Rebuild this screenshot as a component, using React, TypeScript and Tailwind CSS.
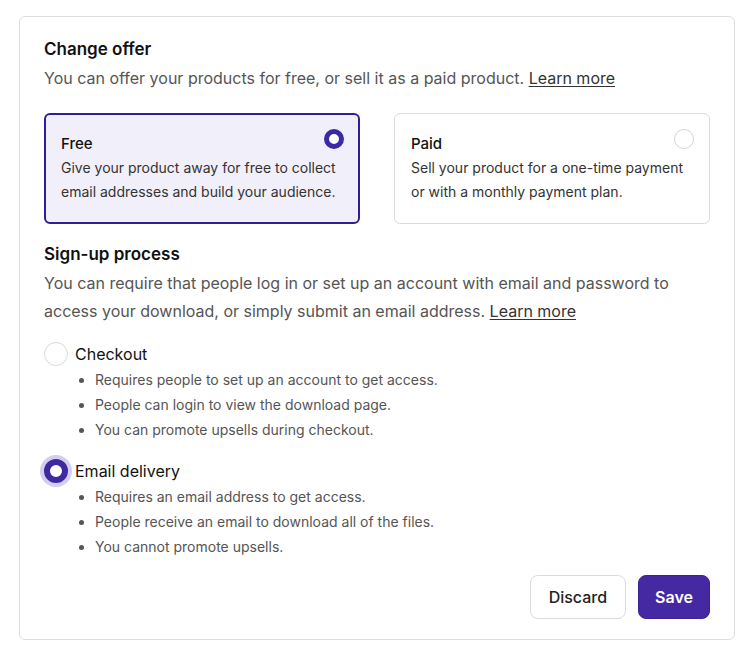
const bullets = {
  checkout: [
    "Requires people to set up an account to get access.",
    "People can login to view the download page.",
    "You can promote upsells during checkout.",
  ],
  email: [
    "Requires an email address to get access.",
    "People receive an email to download all of the files.",
    "You cannot promote upsells.",
  ],
};

const OfferCard = ({
  title,
  text,
  selected,
}: {
  title: string;
  text: string;
  selected?: boolean;
}) => (
  <div
    className={
      selected
        ? "relative flex-1 rounded-md border-2 border-[#2e1f99] bg-[#f1effa] px-[15px] pt-[18px] pb-[18px]"
        : "relative flex-1 rounded-md border border-[#dcdcdc] bg-white px-4 pt-[19px] pb-[19px]"
    }
  >
    <div className="text-[15px] font-medium leading-[22px] text-[#111]">{title}</div>
    <p className="mt-[1px] text-[14px] leading-6 text-[#333]">{text}</p>
    {selected ? (
      <span className="absolute right-[14px] top-[14px] h-5 w-5 rounded-full border-[5px] border-[#3a2aa3] bg-white" />
    ) : (
      <span className="absolute right-[15px] top-[15px] h-5 w-5 rounded-full border border-[#d4d4d4] bg-white" />
    )}
  </div>
);

const Option = ({
  label,
  items,
  selected,
}: {
  label: string;
  items: string[];
  selected?: boolean;
}) => (
  <div>
    <div className="flex items-center gap-[7px]">
      {selected ? (
        <span className="h-6 w-6 rounded-full border-[6px] border-[#3f28a0] bg-white ring-4 ring-[#d3cdef]" />
      ) : (
        <span className="h-6 w-6 rounded-full border border-[#d8d8d8] bg-white" />
      )}
      <span className="text-[16px] leading-6 text-[#111]">{label}</span>
    </div>
    <ul className="mt-[1px] ml-[38px] list-disc pl-[13px] text-[14px] leading-[25px] text-[#555] marker:text-[#555]">
      {items.map((item, i) => (
        <li key={i}>{item}</li>
      ))}
    </ul>
  </div>
);

const App = () => {
  return (
    <div className="min-h-screen bg-white pl-[19px] pr-[15px] pt-4 font-['Inter',sans-serif]">
      <div className="rounded-md border border-[#dddddd] px-6 pt-[20px] pb-[20px]">
        <h2 className="text-[17px] font-semibold leading-6 text-[#111]">Change offer</h2>
        <p className="mt-[5px] text-[16px] leading-6 text-[#555]">
          You can offer your products for free, or sell it as a paid product.{" "}
          <a href="#" className="text-[#333] underline underline-offset-2">
            Learn more
          </a>
        </p>
        <div className="mt-[23px] flex gap-[34px]">
          <OfferCard
            title="Free"
            text="Give your product away for free to collect email addresses and build your audience."
            selected
          />
          <OfferCard
            title="Paid"
            text="Sell your product for a one-time payment or with a monthly payment plan."
          />
        </div>

        <h2 className="mt-[18px] text-[17px] font-semibold leading-6 text-[#111]">
          Sign-up process
        </h2>
        <p className="mt-[3px] text-[16px] leading-7 text-[#555]">
          You can require that people log in or set up an account with email and password to
          access your download, or simply submit an email address.{" "}
          <a href="#" className="text-[#333] underline underline-offset-2">
            Learn more
          </a>
        </p>

        <div className="mt-[17px] flex flex-col gap-[17px]">
          <Option label="Checkout" items={bullets.checkout} />
          <Option label="Email delivery" items={bullets.email} selected />
        </div>

        <div className="mt-[16px] flex justify-end gap-3">
          <button className="h-11 rounded-lg border border-[#dcdcdc] bg-white px-[18px] text-[16px] font-medium text-[#222]">
            Discard
          </button>
          <button className="h-11 rounded-lg border border-[#3b2396] bg-[#4429a3] px-4 text-[16px] font-semibold text-white">
            Save
          </button>
        </div>
      </div>
    </div>
  );
};

export default App;
